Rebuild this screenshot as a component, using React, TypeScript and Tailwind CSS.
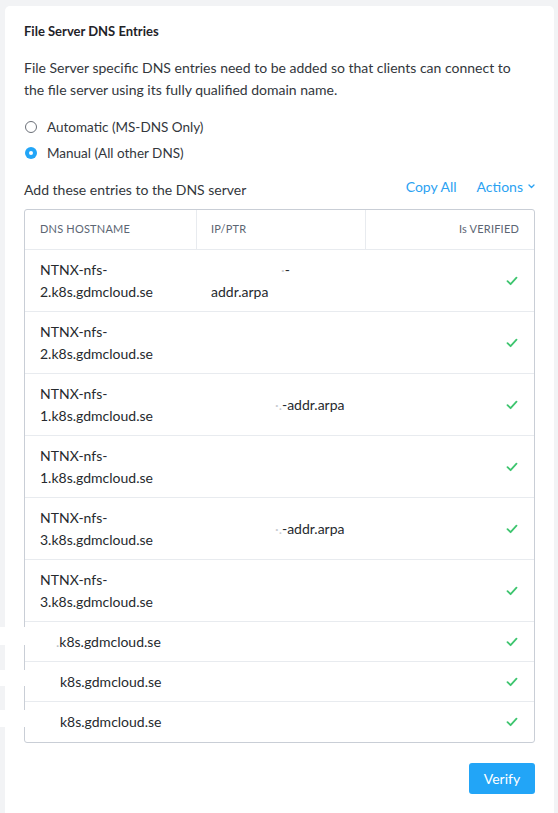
import React from "react";

const Check = () => (
  <svg width="12" height="10" viewBox="0 0 12 10" fill="none">
    <path d="M1.5 5.2 L4.6 8.2 L10.5 1.6" stroke="#3ec56f" strokeWidth="1.8" strokeLinecap="round" strokeLinejoin="round" />
  </svg>
);

type Row = { host: React.ReactNode; ip: React.ReactNode; tall: boolean };

const rows: Row[] = [
  {
    host: <>NTNX-nfs-<br />2.k8s.gdmcloud.se</>,
    ip: (
      <div className="flex flex-col">
        <span className="pl-[70px]"><span className="text-[#c9ccd1]">·</span>-</span>
        <span>addr.arpa</span>
      </div>
    ),
    tall: true,
  },
  { host: <>NTNX-nfs-<br />2.k8s.gdmcloud.se</>, ip: null, tall: true },
  { host: <>NTNX-nfs-<br />1.k8s.gdmcloud.se</>, ip: <span className="pl-[64px]"><span className="text-[#c9ccd1]">·.</span>-addr.arpa</span>, tall: true },
  { host: <>NTNX-nfs-<br />1.k8s.gdmcloud.se</>, ip: null, tall: true },
  { host: <>NTNX-nfs-<br />3.k8s.gdmcloud.se</>, ip: <span className="pl-[64px]"><span className="text-[#c9ccd1]">·.</span>-addr.arpa</span>, tall: true },
  { host: <>NTNX-nfs-<br />3.k8s.gdmcloud.se</>, ip: null, tall: true },
  { host: <span className="pl-[16px]"><span className="text-[#b9bdc3]">.</span>k8s.gdmcloud.se</span>, ip: null, tall: false },
  { host: <span className="pl-[20px]">k8s.gdmcloud.se</span>, ip: null, tall: false },
  { host: <span className="pl-[20px]">k8s.gdmcloud.se</span>, ip: null, tall: false },
];

export default function App() {
  return (
    <div
      className="relative min-h-[813px] bg-[#f2f3f5] pt-[6px] pl-[5px] pr-[4px] text-[#262a2e]"
      style={{ fontFamily: "Lato, 'Open Sans', sans-serif" }}
    >
      <div className="min-h-[807px] rounded-t-[5px] bg-white px-[19px] pt-[16px]">
        <h2 className="text-[13px] font-bold leading-[18px] text-[#1f2328]">File Server DNS Entries</h2>
        <p className="mt-[17px] max-w-[496px] text-[14px] leading-[22px] text-[#33373c]">
          File Server specific DNS entries need to be added so that clients can connect to the file server using its fully qualified domain name.
        </p>
        <div className="mt-[13px] flex flex-col">
          <label className="flex h-[26px] items-center gap-[10px] text-[13.5px] text-[#33373c]">
            <span className="ml-[1px] h-[12px] w-[12px] rounded-full border border-[#6b7078] bg-white" />
            Automatic (MS-DNS Only)
          </label>
          <label className="flex h-[26px] items-center gap-[10px] text-[13.5px] text-[#33373c]">
            <span className="ml-[1px] flex h-[12px] w-[12px] items-center justify-center rounded-full bg-[#22a5f7]">
              <span className="h-[4px] w-[4px] rounded-full bg-white" />
            </span>
            Manual (All other DNS)
          </label>
        </div>
        <div className="mt-[13px] flex h-[20px] items-center justify-between">
          <span className="text-[14px] text-[#33373c]">Add these entries to the DNS server</span>
          <div className="flex items-center gap-[20px] pb-[5px] text-[14px] text-[#2ba2f2]">
            <span>Copy All</span>
            <span className="flex items-center gap-[5px]">
              Actions
              <svg width="7" height="5" viewBox="0 0 7 5" fill="none">
                <path d="M1 1 L3.5 3.5 L6 1" stroke="#2ba2f2" strokeWidth="1.3" strokeLinecap="round" strokeLinejoin="round" />
              </svg>
            </span>
          </div>
        </div>
        <div className="mt-[10px] rounded-[3px] border border-[#c9ced6]">
          <div className="grid h-[40px] grid-cols-[172px_169px_1fr] border-b border-[#e8ebef] text-[11px] tracking-[0.2px] text-[#5c6673]">
            <div className="flex items-center border-r border-[#e8ebef] pl-[15px]">DNS HOSTNAME</div>
            <div className="flex items-center border-r border-[#e8ebef] pl-[14px]">IP/PTR</div>
            <div className="flex items-center justify-end pr-[15px]">Is VERIFIED</div>
          </div>
          {rows.map((r, i) => (
            <div
              key={i}
              className={`grid grid-cols-[172px_169px_1fr] text-[14px] leading-[22px] text-[#262a2e] ${
                r.tall ? "h-[62px]" : "h-[40px]"
              } ${i < rows.length - 1 ? "border-b border-[#e8ebef]" : ""}`}
            >
              <div className="flex items-center pl-[15px]">
                <div>{r.host}</div>
              </div>
              <div className="flex items-center pl-[14px]">{r.ip}</div>
              <div className="flex items-center justify-end pr-[16px]">
                <Check />
              </div>
            </div>
          ))}
        </div>
        <div className="mt-[20px] flex justify-end">
          <button className="h-[31px] w-[66px] rounded-[3px] bg-[#22a5f7] text-[14px] text-white">Verify</button>
        </div>
      </div>
      <div className="absolute left-0 top-[627px] h-[18px] w-[26px] bg-white" />
      <div className="absolute left-0 top-[670px] h-[16px] w-[26px] bg-white" />
      <div className="absolute left-0 top-[710px] h-[17px] w-[26px] bg-white" />
    </div>
  );
}
